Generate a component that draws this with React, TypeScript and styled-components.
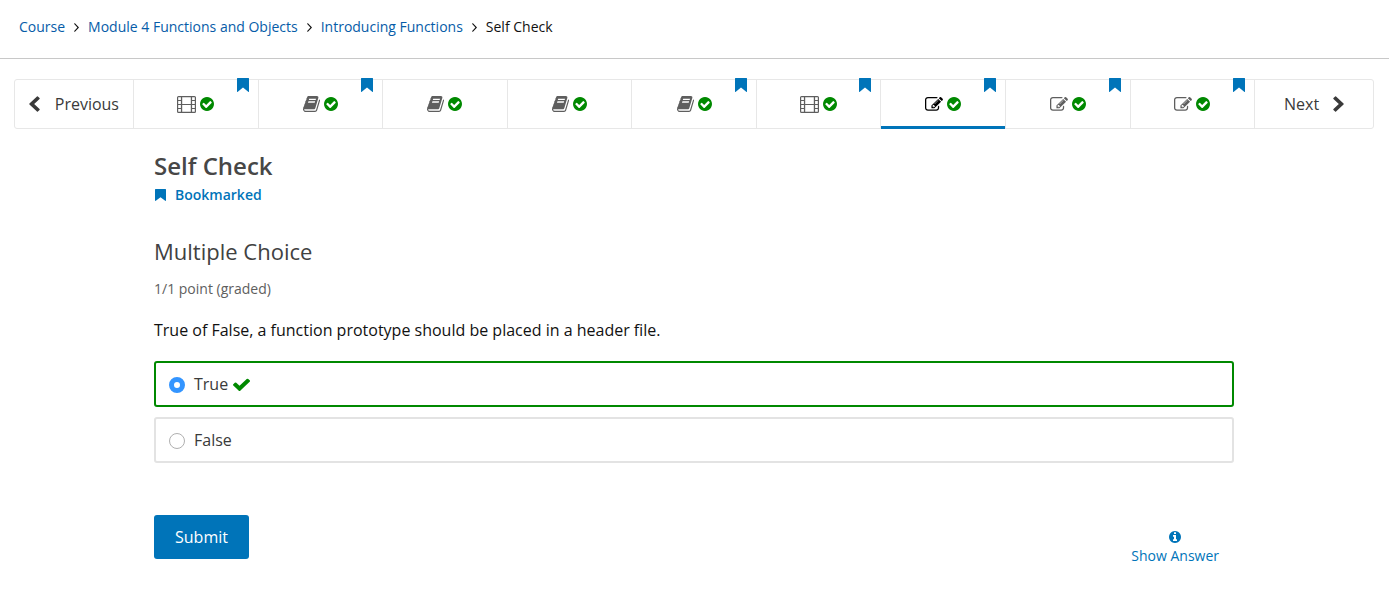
import React, { useState } from "react";
import styled, { createGlobalStyle, css } from "styled-components";

const blue = "#0074b9";
const green = "#008900";
const line = "#e7e7e7";

const GlobalStyle = createGlobalStyle`
  *, *::before, *::after { box-sizing: border-box; }
  body {
    margin: 0;
    background: #fff;
    color: #3a3a3a;
    font-family: "Open Sans", "Liberation Sans", sans-serif;
    font-size: 16px;
    line-height: 24px;
  }
  button { font: inherit; cursor: pointer; }
`;

/* ---------- icons ---------- */

const Svg = styled.svg`
  display: block;
  flex: none;
  fill: currentColor;
`;

type Glyph = { box: string; w: number; h: number; d: string };

const bookmarkPath = "M.5 0h11q.5 0 .5.5v13q0 .5-.5.5L6 9.600.5 14q-.5 0-.5-.5V.5q0-.5.5-.5z";

const glyphs = {
  angle: {
    box: "576 448 608 1024", w: 5, h: 9,
    d: "M1171 960q0 13-10 23l-466 466q-10 10-23 10t-23-10l-50-50q-10-10-10-23t10-23l393-393-393-393q-10-10-10-23t10-23l50-50q10-10 23-10t23 10l466 466q10 10 10 23z",
  },
  left: {
    box: "384 0 1088 1664", w: 11, h: 16,
    d: "M1427 301l-531 531 531 531q19 19 19 45t-19 45l-166 166q-19 19-45 19t-45-19l-742-742q-19-19-19-45t19-45l742-742q19-19 45-19t45 19l166 166q19 19 19 45t-19 45z",
  },
  right: {
    box: "320 0 1088 1664", w: 11, h: 16,
    d: "M1363 877l-742 742q-19 19-45 19t-45-19l-166-166q-19-19-19-45t19-45l531-531-531-531q-19-19-19-45t19-45l166-166q19-19 45-19t45 19l742 742q19 19 19 45t-19 45z",
  },
  checkCircle: {
    box: "128 128 1536 1536", w: 14, h: 14,
    d: "M1412 734q0-28-18-46l-91-90q-19-19-45-19t-45 19l-408 407-226-226q-19-19-45-19t-45 19l-91 90q-18 18-18 46 0 27 18 45l362 362q19 19 45 19 27 0 46-19l543-543q18-18 18-45zm252 162q0 209-103 385.5t-279.5 279.5-385.5 103-385.5-103-279.5-279.5-103-385.5 103-385.5 279.5-279.5 385.5-103 385.5 103 279.5 279.5 103 385.5z",
  },
  check: {
    box: "121 270 1550 1252", w: 17, h: 13,
    d: "M1671 566q0 40-28 68l-724 724-136 136q-28 28-68 28t-68-28l-136-136-362-362q-28-28-28-68t28-68l136-136q28-28 68-28t68 28l294 295 656-657q28-28 68-28t68 28l136 136q28 28 28 68z",
  },
  info: {
    box: "128 128 1536 1536", w: 12, h: 12,
    d: "M1152 1376v-160q0-14-9-23t-23-9h-96v-512q0-14-9-23t-23-9h-320q-14 0-23 9t-9 23v160q0 14 9 23t23 9h96v320h-96q-14 0-23 9t-9 23v160q0 14 9 23t23 9h448q14 0 23-9t9-23zm-128-896v-160q0-14-9-23t-23-9h-192q-14 0-23 9t-9 23v160q0 14 9 23t23 9h192q14 0 23-9t9-23zm640 416q0 209-103 385.5t-279.5 279.5-385.5 103-385.5-103-279.5-279.5-103-385.5 103-385.5 279.5-279.5 385.5-103 385.5 103 279.5 279.5 103 385.5z",
  },
  edit: {
    box: "0 128 1792 1536", w: 18, h: 15,
    d: "M888 1184l116-116-152-152-116 116v56h96v96h56zm440-720q-16-16-33 1l-350 350q-17 17-1 33t33-1l350-350q17-17 1-33zm80 594v190q0 119-84.5 203.5t-203.5 84.5h-832q-119 0-203.5-84.5t-84.5-203.5v-832q0-119 84.5-203.5t203.5-84.5h832q63 0 117 25 15 7 18 23 3 17-9 29l-49 49q-14 14-32 8-23-6-45-6h-832q-66 0-113 47t-47 113v832q0 66 47 113t113 47h832q66 0 113-47t47-113v-126q0-13 9-22l64-64q15-15 35-7t20 29zm-96-738l288 288-672 672h-288v-288zm444 132l-92 92-288-288 92-92q28-28 68-28t68 28l152 152q28 28 28 68t-28 68z",
  },
  book: {
    box: "64 128 1664 1536", w: 17, h: 16,
    d: "M1703 478q40 57 18 129l-275 906q-19 64-76.5 107.5t-122.5 43.5h-923q-77 0-148.5-53.5t-99.5-131.5q-24-67-2-127 0-4 3-27t4-37q1-8-3-21.5t-3-19.5q2-11 8-21t16.5-23.5 16.5-23.5q23-38 45-91.5t30-91.5q3-10 .5-30t-.5-28q3-11 17-28t17-23q21-36 42-92t25-90q1-9-2.5-32t.5-28q4-13 22-30.5t22-22.5q19-26 42.5-84.5t27.5-96.5q1-8-3-25.5t-2-26.5q2-8 9-18t18-23 17-21q8-12 16.5-30.5t15-35 16-36 19.5-32 26.5-23.5 36-11.5 47.5 5.5l-1 3q38-9 51-9h761q74 0 114 56t18 130l-274 906q-36 119-71.5 153.5t-128.5 34.5h-869q-27 0-38 15-11 16-1 43 24 70 144 70h923q29 0 56-15.5t35-41.5l300-987q7-22 5-57 38 15 59 43zm-1064 2q-4 13 2 22.5t20 9.5h608q13 0 25.5-9.5t16.5-22.5l21-64q4-13-2-22.5t-20-9.5h-608q-13 0-25.5 9.5t-16.5 22.5zm-83 256q-4 13 2 22.5t20 9.5h608q13 0 25.5-9.5t16.5-22.5l21-64q4-13-2-22.5t-20-9.5h-608q-13 0-25.5 9.5t-16.5 22.5z",
  },
  flag: { box: "0 0 12 14", w: 12, h: 14, d: bookmarkPath },
  bookmark: { box: "0 0 12 14", w: 11, h: 12, d: bookmarkPath },
} satisfies Record<string, Glyph>;

function Icon({ name }: { name: keyof typeof glyphs }) {
  const g = glyphs[name];
  return (
    <Svg width={g.w} height={g.h} viewBox={g.box} preserveAspectRatio="none" aria-hidden="true">
      <path d={g.d} />
    </Svg>
  );
}

function FilmIcon() {
  return (
    <Svg width="19" height="17" viewBox="0 0 19 17" aria-hidden="true">
      <path
        fillRule="evenodd"
        d="M1.500 0h16q1.500 0 1.500 1.500v14q0 1.500-1.500 1.500h-16q-1.500 0-1.500-1.500v-14q0-1.500 1.500-1.500z
           M5.200 1.200v6.700h8.600v-6.700z M5.200 9.100v6.700h8.600v-6.700z
           M1.200 1.300v2.600h2.700v-2.600z M1.200 5.100v2.800h2.700v-2.800z M1.200 9.100v2.800h2.700v-2.800z M1.200 13.100v2.600h2.700v-2.600z
           M15.100 1.300v2.600h2.700v-2.600z M15.100 5.100v2.800h2.700v-2.800z M15.100 9.100v2.800h2.700v-2.800z M15.100 13.100v2.600h2.700v-2.600z"
      />
    </Svg>
  );
}

/* ---------- breadcrumb ---------- */

const Header = styled.header`
  border-bottom: 1px solid #c8c8c8;
  padding: 17px 19px 21px;
`;

const Crumbs = styled.ol`
  display: flex;
  flex-wrap: wrap;
  align-items: center;
  margin: 0;
  padding: 0;
  list-style: none;
  font-size: 14px;
  line-height: 20px;
  color: #111;
`;

const Crumb = styled.li`
  display: flex;
  align-items: center;

  a { color: #065ca8; text-decoration: none; }
  svg { margin: 0 9px; }
`;

/* ---------- sequence bar ---------- */

const Page = styled.div`
  margin: 20px 15px 32px 14px;
`;

const Sequence = styled.nav`
  display: flex;
  height: 50px;
  border: 1px solid ${line};
  border-radius: 3px;
`;

const StepButton = styled.button<{ $side: "left" | "right" }>`
  display: flex;
  align-items: center;
  flex: none;
  width: 118px;
  padding: 0 14px;
  border: 0;
  background: none;
  color: #3a3a3a;
  gap: 14px;
  ${(p) =>
    p.$side === "right"
      ? css`padding-left: 29px;`
      : css`justify-content: space-between;`}
`;

const Tabs = styled.ol`
  display: flex;
  flex: 1;
  margin: 0;
  padding: 0;
  list-style: none;
`;

const TabItem = styled.li`
  position: relative;
  display: flex;
  flex: 1 1 0;
  border-left: 1px solid ${line};

  &:last-child { border-right: 1px solid ${line}; }
`;

const TabButton = styled.button<{ $active?: boolean }>`
  display: flex;
  flex: 1;
  align-items: center;
  justify-content: center;
  gap: 4px;
  padding: 0;
  border: 0;
  background: none;
  color: ${(p) => (p.$active ? "#000" : "#5e5e5e")};
  ${(p) =>
    p.$active &&
    css`
      margin-bottom: -1px;
      padding-top: 2px;
      border-bottom: 3px solid ${blue};
    `}
`;

const Tint = styled.span<{ $color: string }>`
  display: inline-flex;
  color: ${(p) => p.$color};
`;

const Flag = styled.span`
  position: absolute;
  top: -2px;
  right: 9px;
  color: ${blue};
`;

/* ---------- unit ---------- */

const Unit = styled.main`
  max-width: 1080px;
  margin: 0 auto;
  padding-top: 19px;
`;

const UnitTitle = styled.h1`
  margin: 0;
  font-size: 24px;
  line-height: 36px;
  font-weight: 600;
  color: #474747;
`;

const BookmarkButton = styled.button`
  display: flex;
  align-items: center;
  gap: 9px;
  margin-top: 1px;
  padding: 0 1px;
  border: 0;
  background: none;
  color: ${blue};
  font-size: 14px;
  line-height: 20px;
  font-weight: 600;
`;

const ProblemTitle = styled.h2`
  margin: 30px 0 0;
  font-size: 22px;
  line-height: 32px;
  font-weight: 400;
  color: #414141;
`;

const Points = styled.p`
  margin: 12px 0 0;
  font-size: 14px;
  line-height: 20px;
  color: #5e5e5e;
`;

const Choices = styled.fieldset`
  display: grid;
  gap: 10px;
  margin: 0;
  padding: 0;
  border: 0;
`;

const Question = styled.legend`
  padding: 19px 0;
  color: #111;
`;

const Choice = styled.label<{ $correct?: boolean }>`
  display: flex;
  align-items: center;
  gap: 9px;
  min-height: 46px;
  padding: 0 13px;
  border: 2px solid ${(p) => (p.$correct ? green : "#e3e3e3")};
  border-radius: 3px;
  cursor: pointer;
`;

const ChoiceText = styled.span`
  display: flex;
  align-items: center;
  gap: 5px;
`;

const Radio = styled.input`
  appearance: none;
  flex: none;
  width: 16px;
  height: 16px;
  margin: 2px 0 0;
  border: 1px solid #b0b0b0;
  border-radius: 50%;
  background: #fff;

  &:checked { border: 5px solid #3395ff; }
`;

const Actions = styled.div`
  display: flex;
  align-items: flex-start;
  justify-content: space-between;
  margin-top: 52px;
  padding-right: 15px;
`;

const Submit = styled.button`
  height: 44px;
  padding: 0 21px;
  border: 0;
  border-radius: 3px;
  background: ${blue};
  color: #fff;
`;

const ShowAnswer = styled.button`
  display: flex;
  flex-direction: column;
  align-items: center;
  gap: 3px;
  margin-top: 16px;
  padding: 0;
  border: 0;
  background: none;
  color: ${blue};
  font-size: 14px;
  line-height: 20px;
`;

type Kind = "Video" | "Reading" | "Problem";

const units: { kind: Kind; marked: boolean }[] = [
  { kind: "Video", marked: true },
  { kind: "Reading", marked: true },
  { kind: "Reading", marked: false },
  { kind: "Reading", marked: false },
  { kind: "Reading", marked: true },
  { kind: "Video", marked: true },
  { kind: "Problem", marked: true },
  { kind: "Problem", marked: true },
  { kind: "Problem", marked: true },
];

const trail = ["Course", "Module 4 Functions and Objects", "Introducing Functions"];

export default function App() {
  const [active, setActive] = useState(6);
  const [answer, setAnswer] = useState("True");

  return (
    <>
      <GlobalStyle />
      <Header>
        <nav aria-label="Breadcrumb">
          <Crumbs>
            {trail.map((t) => (
              <Crumb key={t}>
                <a href="#">{t}</a>
                <Icon name="angle" />
              </Crumb>
            ))}
            <Crumb aria-current="page">Self Check</Crumb>
          </Crumbs>
        </nav>
      </Header>
      <Page>
        <Sequence aria-label="Sequence">
          <StepButton $side="left" onClick={() => setActive(Math.max(0, active - 1))}>
            <Icon name="left" />
            Previous
          </StepButton>
          <Tabs>
            {units.map((u, i) => (
              <TabItem key={i}>
                <TabButton $active={i === active} aria-label={u.kind} onClick={() => setActive(i)}>
                  {u.kind === "Video" ? (
                    <FilmIcon />
                  ) : (
                    <Icon name={u.kind === "Reading" ? "book" : "edit"} />
                  )}
                  <Tint $color={green}>
                    <Icon name="checkCircle" />
                  </Tint>
                </TabButton>
                {u.marked && (
                  <Flag>
                    <Icon name="flag" />
                  </Flag>
                )}
              </TabItem>
            ))}
          </Tabs>
          <StepButton
            $side="right"
            onClick={() => setActive(Math.min(units.length - 1, active + 1))}
          >
            Next
            <Icon name="right" />
          </StepButton>
        </Sequence>

        <Unit>
          <UnitTitle>Self Check</UnitTitle>
          <BookmarkButton>
            <Icon name="bookmark" />
            Bookmarked
          </BookmarkButton>
          <ProblemTitle>Multiple Choice</ProblemTitle>
          <Points>1/1 point (graded)</Points>
          <Choices>
            <Question>True of False, a function prototype should be placed in a header file.</Question>
            {["True", "False"].map((c) => (
              <Choice key={c} $correct={c === "True"}>
                <Radio
                  type="radio"
                  name="answer"
                  checked={answer === c}
                  onChange={() => setAnswer(c)}
                />
                <ChoiceText>
                  {c}
                  {c === "True" && (
                    <Tint $color={green}>
                      <Icon name="check" />
                    </Tint>
                  )}
                </ChoiceText>
              </Choice>
            ))}
          </Choices>
          <Actions>
            <Submit>Submit</Submit>
            <ShowAnswer>
              <Icon name="info" />
              Show Answer
            </ShowAnswer>
          </Actions>
        </Unit>
      </Page>
    </>
  );
}
